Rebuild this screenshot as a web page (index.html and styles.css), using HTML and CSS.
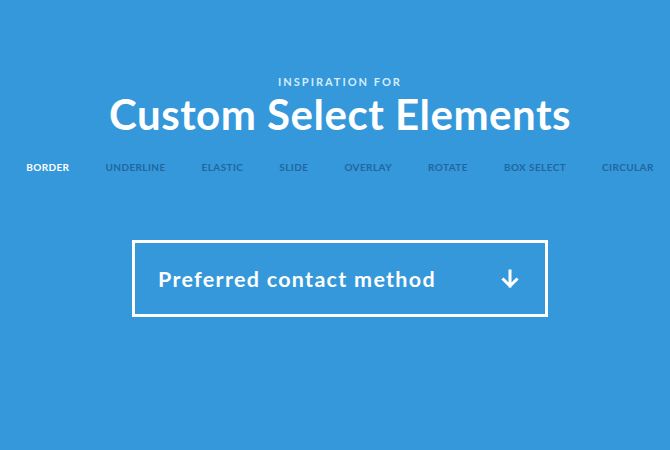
FILE: index.html
```html
<!DOCTYPE html>
<html lang="en">
<head>
  <meta charset="UTF-8" />
  <title>Custom Select Elements</title>
  <link rel="stylesheet" href="styles.css">
</head>
<body>
  <header class="header">
    <span class="subtitle">Inspiration for</span>
    <h1>Custom Select Elements</h1>
    <nav class="demos">
      <a class="current" href="#">Border</a>
      <a href="#">Underline</a>
      <a href="#">Elastic</a>
      <a href="#">Slide</a>
      <a href="#">Overlay</a>
      <a href="#">Rotate</a>
      <a href="#">Box Select</a>
      <a href="#">Circular</a>
    </nav>
  </header>

  <div class="select-wrap">
    <div class="cs-select">
      <span class="cs-placeholder">Preferred contact method</span>
      <svg class="cs-arrow" width="18" height="20" viewBox="0 0 18 20">
        <path d="M9 2 V17 M2.5 10.5 L9 17 L15.5 10.5" fill="none" stroke="#fff" stroke-width="3" stroke-linecap="square" />
      </svg>
    </div>
  </div>
</body>
</html>
```

FILE: styles.css
```css
body {
  margin: 0;
  padding-left: 10px;
  font-family: 'Lato', 'Open Sans', sans-serif;
  background: #3498db;
  color: #fff;
  height: 450px;
}
.header {
  display: flex;
  flex-direction: column;
  align-items: center;
  padding-top: 75px;
}
.subtitle {
  font-size: 11px;
  font-weight: 700;
  letter-spacing: 2px;
  text-transform: uppercase;
  color: #d6ecfb;
}
h1 {
  margin: 2px 0 0;
  font-size: 42px;
  font-weight: 700;
  letter-spacing: 0.5px;
  line-height: 48px;
}
.demos {
  display: flex;
  justify-content: center;
  gap: 36px;
  margin-top: 23px;
}
.demos a {
  font-size: 10px;
  font-weight: 700;
  letter-spacing: 0.4px;
  text-transform: uppercase;
  text-decoration: none;
  color: #22669d;
}
.demos a.current {
  color: #fff;
}
.select-wrap {
  display: flex;
  justify-content: center;
  margin-top: 67px;
}
.cs-select {
  box-sizing: border-box;
  width: 416px;
  height: 77px;
  border: 3px solid #fff;
  display: flex;
  align-items: center;
  justify-content: space-between;
  padding: 0 26px 0 23px;
}
.cs-placeholder {
  font-size: 21.5px;
  font-weight: 700;
  letter-spacing: 1.3px;
}
.cs-arrow {
  display: block;
}
```
